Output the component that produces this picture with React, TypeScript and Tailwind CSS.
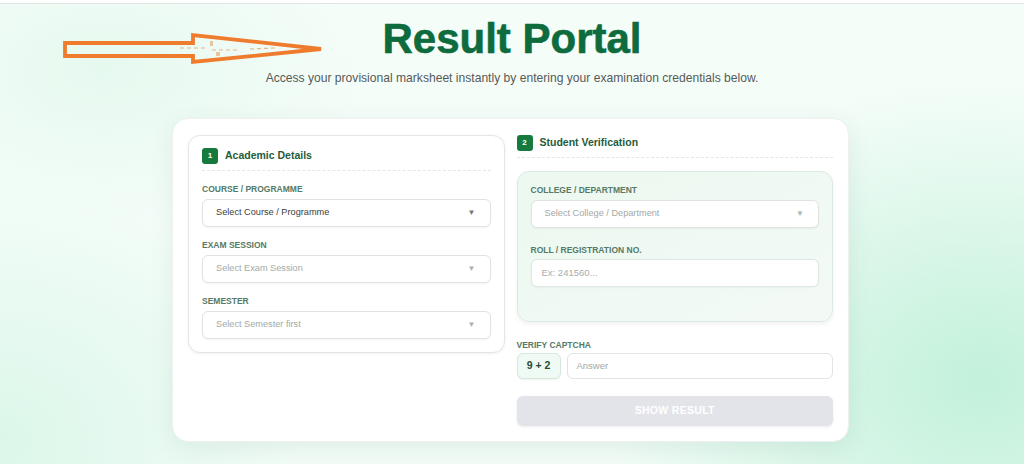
import React from "react";

const font = { fontFamily: '"Liberation Sans", Arial, sans-serif' };

function Badge({ n }: { n: string }) {
  return (
    <span className="flex h-4 w-4 items-center justify-center rounded-[3px] bg-[#167a3e] text-[8px] font-bold leading-none text-white">
      {n}
    </span>
  );
}

function Label({ children }: { children: React.ReactNode }) {
  return (
    <div className="mb-1 h-3 text-[8.5px] font-bold uppercase leading-3 text-[#557a66]">
      {children}
    </div>
  );
}

function Select({ text, active }: { text: string; active?: boolean }) {
  return (
    <div className="flex h-7 items-center justify-between rounded-md border border-[#dfe4e1] bg-white pl-[13px] pr-[14px] shadow-[0_1px_2px_rgba(0,0,0,0.05)]">
      <span className={`text-[9.2px] ${active ? "text-[#3d3d3d]" : "text-[#a3aaa6]"}`}>{text}</span>
      <span className={`text-[8px] ${active ? "text-[#6f7c75]" : "text-[#aab3ae]"}`}>▼</span>
    </div>
  );
}

export default function App() {
  return (
    <div
      style={font}
      className="relative h-[464px] w-full overflow-hidden bg-[radial-gradient(ellipse_380px_300px_at_96%_82%,#c2f1da_0%,rgba(194,241,218,0)_100%),radial-gradient(ellipse_300px_260px_at_0%_95%,#dcf7ea_0%,rgba(220,247,234,0)_100%),radial-gradient(ellipse_260px_160px_at_10%_15%,#e6f9ef_0%,rgba(230,249,239,0)_100%),linear-gradient(#f5fdf9,#f2fcf7)]"
    >
      <div className="h-[3px] bg-white" />
      <div className="h-px bg-[#e0e3e1]" />

      {/* annotation arrow */}
      <svg className="absolute left-0 top-0" width="340" height="80" viewBox="0 0 340 80">
        <polygon
          points="65,43 193,43 193,35 321,49 193,62 193,56 65,56"
          fill="none"
          stroke="#ef7b2c"
          strokeWidth="3.8"
          strokeLinejoin="miter"
        />
        <path d="M180 48 L205 48 M212 50 L240 50 M250 49 L275 48" stroke="#e9b48a" strokeWidth="1.2" strokeDasharray="4 3" fill="none" />
        <rect x="210" y="41" width="3" height="5" fill="#e8c49f" />
        <rect x="216" y="52" width="4" height="4" fill="#e8c49f" />
      </svg>

      <h1 className="mt-[15px] text-center text-[42px] font-bold leading-[40px] text-[#0d6b3d] [-webkit-text-stroke:0.6px_#0d6b3d]">
        Result Portal
      </h1>
      <p className="mt-[11px] text-center text-[12.1px] leading-4 text-[#555a58]">
        Access your provisional marksheet instantly by entering your examination credentials below.
      </p>

      <div className="ml-[172px] mt-[32px] grid w-[677px] grid-cols-2 items-start gap-3 rounded-2xl border border-[#eef1ef] bg-white px-[15px] pb-[15px] pt-4 shadow-[0_6px_24px_rgba(16,80,50,0.08)]">
        {/* Left panel */}
        <div className="rounded-xl border border-[#e2e7e4] bg-white px-[13px] pb-[13px] pt-[12px] shadow-[0_1px_3px_rgba(0,0,0,0.06)]">
          <div className="flex items-center gap-[7px] border-b border-dashed border-[#e3e7e5] pb-[6px]">
            <Badge n="1" />
            <span className="text-[10.5px] font-bold text-[#1f5c3b]">Academic Details</span>
          </div>
          <div className="mt-3 flex flex-col gap-3">
            <div>
              <Label>Course / Programme</Label>
              <Select text="Select Course / Programme" active />
            </div>
            <div>
              <Label>Exam Session</Label>
              <Select text="Select Exam Session" />
            </div>
            <div>
              <Label>Semester</Label>
              <Select text="Select Semester first" />
            </div>
          </div>
        </div>

        {/* Right column */}
        <div>
          <div className="flex items-center gap-[7px] border-b border-dashed border-[#e3e7e5] pb-[6px]">
            <Badge n="2" />
            <span className="text-[10.5px] font-bold text-[#1f5c3b]">Student Verification</span>
          </div>
          <div className="mt-[13px] h-[151px] rounded-xl border border-[#dcebe1] bg-gradient-to-br from-[#ecf8f0] to-[#f3faf6] px-[13px] pt-[12px] shadow-[0_2px_4px_rgba(0,0,0,0.06)]">
            <Label>College / Department</Label>
            <Select text="Select College / Department" />
            <div className="mt-4">
              <div className="mb-[3px] h-3 text-[8.5px] font-bold uppercase leading-3 text-[#557a66]">
                Roll / Registration No.
              </div>
              <div className="flex h-7 items-center rounded-md border border-[#e0e6e2] bg-white pl-[10px] shadow-[0_1px_2px_rgba(0,0,0,0.04)]">
                <span className="text-[9.5px] text-[#a7aeaa]">Ex: 241560...</span>
              </div>
            </div>
          </div>

          <div className="mt-[17px]">
            <div className="mb-[2px] h-3 text-[8.5px] font-bold uppercase leading-3 text-[#557a66]">
              Verify Captcha
            </div>
            <div className="flex gap-[6px]">
              <div className="flex h-[26px] w-[44px] items-center justify-center rounded-md border border-[#d5e8dc] bg-[#eefaf3] text-[10.5px] font-bold text-[#1f4d36] shadow-[0_1px_2px_rgba(0,0,0,0.06)]">
                9 + 2
              </div>
              <div className="flex h-[26px] flex-1 items-center rounded-md border border-[#e0e4e2] bg-white pl-[9px]">
                <span className="text-[9.5px] text-[#a3a9a6]">Answer</span>
              </div>
            </div>
          </div>

          <div className="mt-[17px] flex h-[30px] items-center justify-center rounded-md bg-[#e3e4ea] shadow-[0_1px_3px_rgba(0,0,0,0.08)]">
            <span className="text-[10.5px] font-bold tracking-[0.3px] text-white">SHOW RESULT</span>
          </div>
        </div>
      </div>
    </div>
  );
}
